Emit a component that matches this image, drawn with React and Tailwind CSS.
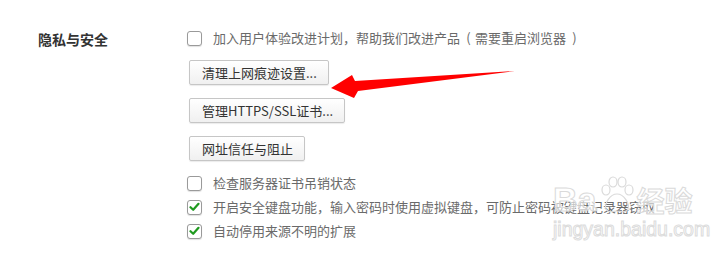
import React from "react";

const font = { fontFamily: '"Microsoft YaHei", "Noto Sans CJK SC", "Noto Sans", sans-serif' };

function Check({ checked }) {
  return (
    <span className="flex h-[15px] w-[15px] shrink-0 items-center justify-center rounded-[3px] border border-[#9a9a9a] bg-white shadow-[0_1px_1px_rgba(0,0,0,0.12)]">
      {checked && (
        <svg width="11" height="10" viewBox="0 0 11 10">
          <path d="M1.5 5.2 L4.2 7.8 L9.5 1.8" fill="none" stroke="#1f9a1f" strokeWidth="2.2" strokeLinecap="round" strokeLinejoin="round" />
        </svg>
      )}
    </span>
  );
}

function Row({ checked, children }) {
  return (
    <div className="flex h-[24px] items-center">
      <Check checked={checked} />
      <span className="ml-[11px] whitespace-nowrap text-[13px] leading-[24px] text-[#6a6a6a]">{children}</span>
    </div>
  );
}

function Btn({ children }) {
  return (
    <div className="flex h-[25px] w-fit items-center rounded-[2px] border border-[#c6c6c6] bg-gradient-to-b from-white to-[#f0f0f0] pl-[12px] pr-[11px] text-[13px] text-[#333] shadow-[0_1px_1px_rgba(0,0,0,0.08)]">
      {children}
    </div>
  );
}

export default function App() {
  return (
    <div className="relative h-[256px] w-[723px] overflow-hidden bg-white" style={font}>
      <div className="flex pt-[26px]">
        <div className="w-[187px] pl-[38px]">
          <div className="flex h-[24px] items-center pt-[2px] text-[14px] font-bold text-[#333]">隐私与安全</div>
        </div>
        <div className="flex flex-col">
          <Row>
            加入用户体验改进计划，帮助我们改进产品
            <span className="ml-[2px] inline-block w-[13px] text-center">(</span>
            需要重启浏览器
            <span className="ml-[2px] inline-block w-[13px] text-center">)</span>
          </Row>
          <div className="ml-[2px] mt-[10px] flex flex-col gap-[13px]">
            <Btn>清理上网痕迹设置...</Btn>
            <Btn>管理HTTPS/SSL证书...</Btn>
            <Btn>网址信任与阻止</Btn>
          </div>
          <div className="mt-[10px] flex flex-col">
            <Row>检查服务器证书吊销状态</Row>
            <Row checked>开启安全键盘功能，输入密码时使用虚拟键盘，可防止密码被键盘记录器窃取</Row>
            <Row checked>自动停用来源不明的扩展</Row>
          </div>
        </div>
      </div>

      {/* red arrow */}
      <svg className="pointer-events-none absolute left-0 top-0" width="723" height="256">
        <polygon points="331,88 352,75 355,81 515,71 358,91 354,98" fill="#ff0000" />
      </svg>

      {/* watermark */}
      <div className="pointer-events-none absolute left-[553px] top-[176px] flex flex-col items-start">
        <div className="flex items-end">
          <span className="text-[34px] font-bold leading-[36px] text-white/60 [-webkit-text-stroke:1px_#dadada]" style={{ fontFamily: '"Liberation Sans", sans-serif' }}>Ba</span>
          <svg width="40" height="40" viewBox="0 0 40 40" className="mb-[1px]">
            <g fill="none" stroke="#dadada" strokeWidth="1.2">
              <ellipse cx="10" cy="14" rx="4" ry="5" />
              <ellipse cx="17" cy="6" rx="4" ry="5" />
              <ellipse cx="26" cy="6" rx="4" ry="5" />
              <ellipse cx="33" cy="14" rx="4" ry="5" />
              <path d="M21 18 C14 18 8 28 10 33 C12 38 18 35 21 35 C24 35 30 38 32 33 C34 28 28 18 21 18 Z" />
            </g>
          </svg>
          <span className="text-[28px] font-bold leading-[34px] text-white/60 [-webkit-text-stroke:1px_#dadada]">经验</span>
        </div>
        <span className="mt-[3px] text-[19.5px] leading-[19px] text-white/60 [-webkit-text-stroke:1px_#dcdcdc]" style={{ fontFamily: '"Liberation Sans", sans-serif' }}>jingyan.baidu.com</span>
      </div>
    </div>
  );
}
